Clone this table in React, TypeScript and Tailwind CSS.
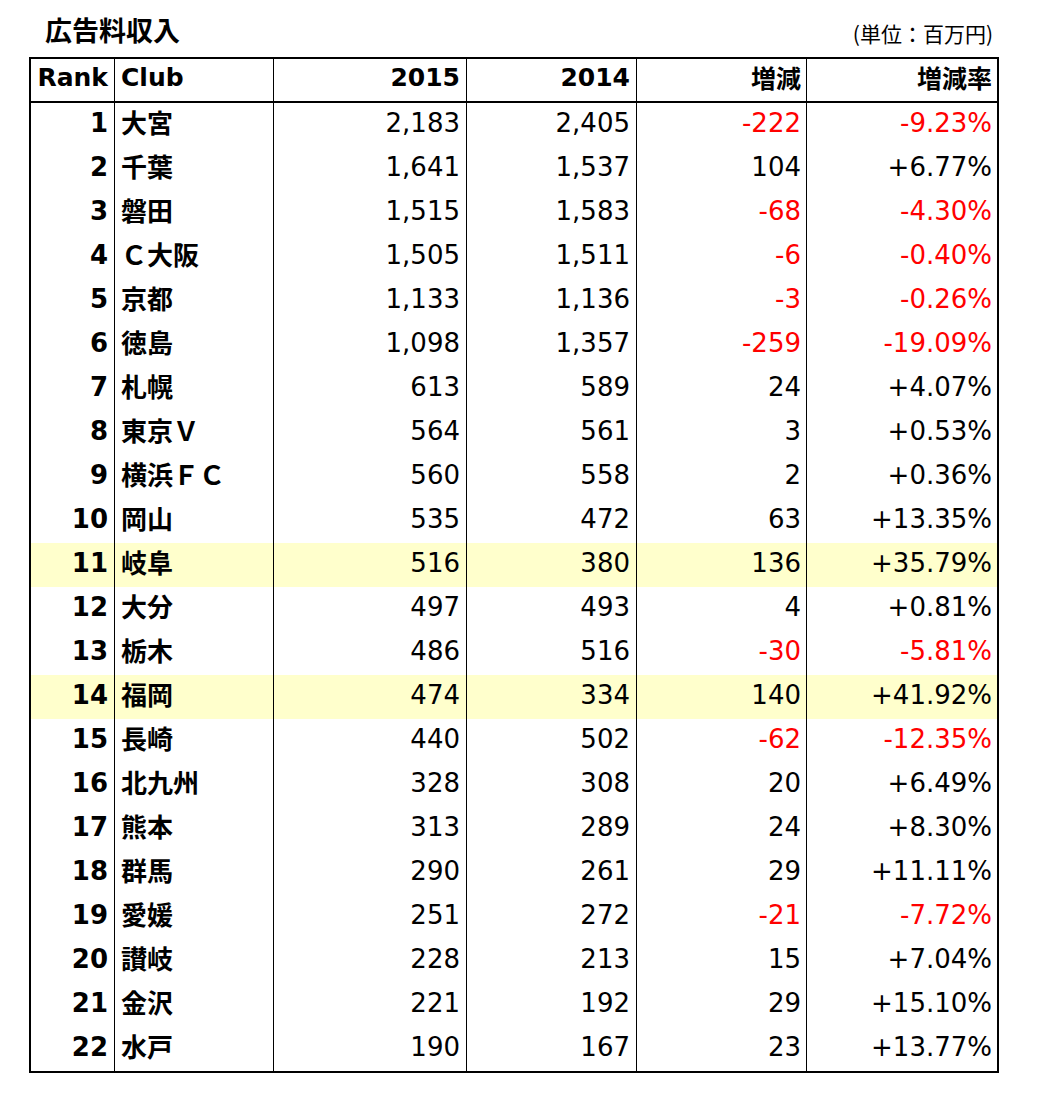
import React from "react";

type Row = [number, string, string, string, string, string, boolean?];

const rows: Row[] = [
  [1, "大宮", "2,183", "2,405", "-222", "-9.23%"],
  [2, "千葉", "1,641", "1,537", "104", "+6.77%"],
  [3, "磐田", "1,515", "1,583", "-68", "-4.30%"],
  [4, "Ｃ大阪", "1,505", "1,511", "-6", "-0.40%"],
  [5, "京都", "1,133", "1,136", "-3", "-0.26%"],
  [6, "徳島", "1,098", "1,357", "-259", "-19.09%"],
  [7, "札幌", "613", "589", "24", "+4.07%"],
  [8, "東京Ｖ", "564", "561", "3", "+0.53%"],
  [9, "横浜ＦＣ", "560", "558", "2", "+0.36%"],
  [10, "岡山", "535", "472", "63", "+13.35%"],
  [11, "岐阜", "516", "380", "136", "+35.79%", true],
  [12, "大分", "497", "493", "4", "+0.81%"],
  [13, "栃木", "486", "516", "-30", "-5.81%"],
  [14, "福岡", "474", "334", "140", "+41.92%", true],
  [15, "長崎", "440", "502", "-62", "-12.35%"],
  [16, "北九州", "328", "308", "20", "+6.49%"],
  [17, "熊本", "313", "289", "24", "+8.30%"],
  [18, "群馬", "290", "261", "29", "+11.11%"],
  [19, "愛媛", "251", "272", "-21", "-7.72%"],
  [20, "讃岐", "228", "213", "15", "+7.04%"],
  [21, "金沢", "221", "192", "29", "+15.10%"],
  [22, "水戸", "190", "167", "23", "+13.77%"],
];

const font = { fontFamily: '"DejaVu Sans", "Noto Sans CJK JP", sans-serif' };
const cjk = { fontFamily: '"Noto Sans CJK JP", sans-serif' };

export default function App() {
  return (
    <div className="bg-white w-[1050px] h-[1096px] text-black" style={font}>
      <div className="pl-[29px] w-[999px]">
        <div className="flex justify-between items-center h-[57px] pt-[2px]">
          <div className="pl-[16px] text-[27px] font-bold leading-[30px] tracking-[0px]" style={cjk}>
            広告料収入
          </div>
          <div className="pr-[6px] text-[21px] leading-[30px] pt-[6px]" style={cjk}>
            (単位：百万円)
          </div>
        </div>
        <div className="border-2 border-black w-[970px]">
          <div className="flex h-[44px] border-b-2 border-black font-bold text-[25px] leading-[30px]">
            <div className="w-[84px] border-r border-black flex items-center justify-end pr-[6px] pb-[4px]">Rank</div>
            <div className="w-[159px] border-r border-black flex items-center pl-[6px] pb-[4px]">Club</div>
            <div className="w-[193px] border-r border-black flex items-center justify-end pr-[6px] pb-[4px]">2015</div>
            <div className="w-[170px] border-r border-black flex items-center justify-end pr-[6px] pb-[4px]">2014</div>
            <div className="w-[170px] border-r border-black flex items-center justify-end pr-[5px] pb-[6px]" style={cjk}>増減</div>
            <div className="w-[190px] flex items-center justify-end pr-[5px] pb-[6px]" style={cjk}>増減率</div>
          </div>
          {rows.map(([rank, club, a, b, d, r, hl]) => {
            const neg = d.startsWith("-");
            return (
              <div
                key={rank}
                className={`flex h-[44px] text-[26px] leading-[30px] ${hl ? "bg-[#ffffcc]" : ""}`}
              >
                <div className="w-[84px] border-r border-black flex items-center justify-end pr-[6px] pb-[4px] font-bold">{rank}</div>
                <div className="w-[159px] border-r border-black flex items-center pl-[6px] pb-[7px] font-bold" style={cjk}>
                  {club}
                </div>
                <div className="w-[193px] border-r border-black flex items-center justify-end pr-[6px] pb-[4px]">{a}</div>
                <div className="w-[170px] border-r border-black flex items-center justify-end pr-[6px] pb-[4px]">{b}</div>
                <div className={`w-[170px] border-r border-black flex items-center justify-end pr-[5px] pb-[4px] ${neg ? "text-[#ff0000]" : ""}`}>{d}</div>
                <div className={`w-[190px] flex items-center justify-end pr-[5px] pb-[4px] ${neg ? "text-[#ff0000]" : ""}`}>{r}</div>
              </div>
            );
          })}
        </div>
      </div>
    </div>
  );
}
